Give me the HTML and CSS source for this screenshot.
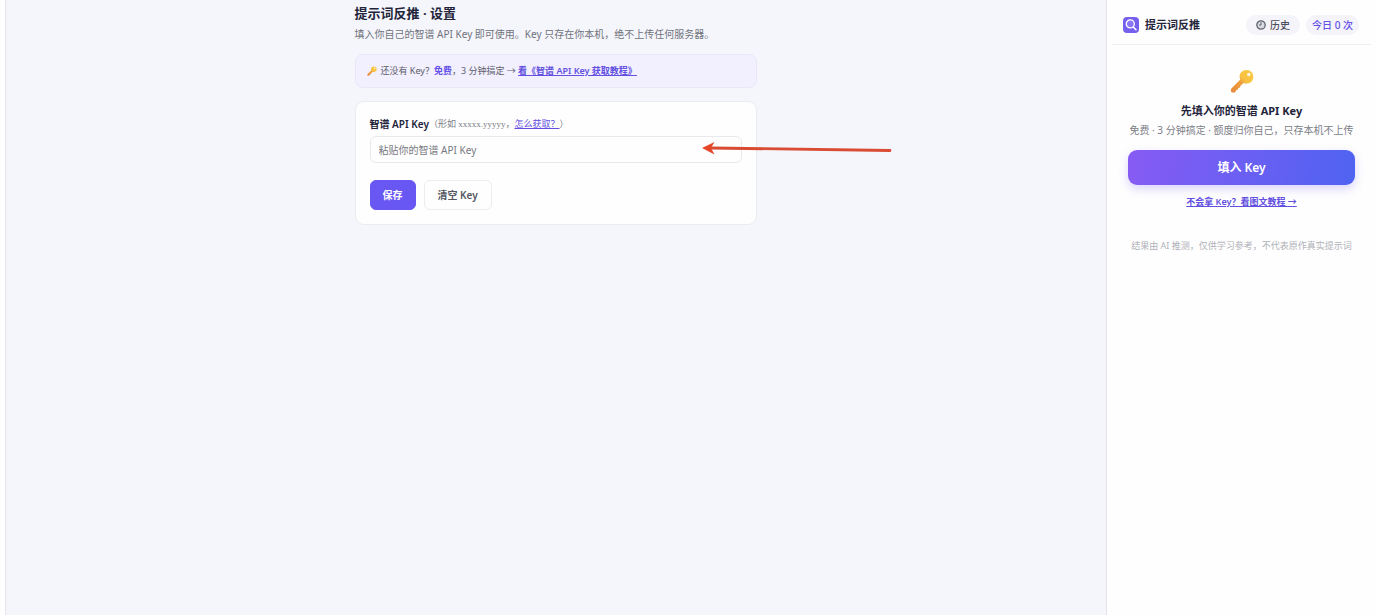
FILE: index.html
```html
<!DOCTYPE html>
<html lang="zh-CN">
<head>
<meta charset="utf-8">
<meta name="viewport" content="width=device-width, initial-scale=1">
<title>提示词反推 · 设置</title>
<link rel="stylesheet" href="styles.css">
</head>
<body>
<svg class="defs" aria-hidden="true">
  <defs>
    <linearGradient id="keyFill" x1="0" y1="1" x2="1" y2="0">
      <stop offset="0" stop-color="#e8873a"/>
      <stop offset="0.45" stop-color="#ef9f3e"/>
      <stop offset="0.6" stop-color="#f8c343"/>
      <stop offset="1" stop-color="#fbc93f"/>
    </linearGradient>
    <symbol id="key" viewBox="0 0 24 24">
      <path fill="url(#keyFill)" d="M16.5 1C12.400 1 9.600 4 9.600 7.500c0 1.100.2 2.100.7 3L1.400 19.400c-.5.5-.6 1-.5 1.600l.2 1.600c.1.600.5.900 1 .9l2.300-.1c.5 0 .8-.2 1-.6l.8-1.800 1.500-.2.600-1.900 1.700-.4.500-1.700 3.100-2.900c.9.400 1.800.6 2.900.6 4 0 6.800-2.900 6.800-6.600C23.300 4 20.500 1 16.500 1z"/>
      <circle cx="18.800" cy="5.500" r="1.700" fill="#fff8e8"/>
    </symbol>
  </defs>
</svg>
<div class="layout">
  <main class="settings">
    <div class="content">
      <h1 class="title">提示词反推 · 设置</h1>
      <p class="intro">填入你自己的智谱 API Key 即可使用。Key 只存在你本机，绝不上传任何服务器。</p>
      <div class="notice">
        <svg class="notice-key" aria-hidden="true"><use href="#key"/></svg>
        <span>还没有 Key？<b class="free">免费</b>，3 分钟搞定 → <a class="guide" href="#guide">看《智谱 API Key 获取教程》</a></span>
      </div>
      <form class="card">
        <div class="label-row">
          <label class="label" for="api-key">智谱 API Key</label>
          <span class="hint">（形如 <code class="sample">xxxxx.yyyyy</code>，<a href="#how">怎么获取？</a>）</span>
        </div>
        <div class="field">
          <input class="input" id="api-key" type="text" placeholder="粘贴你的智谱 API Key">
          <svg class="arrow" viewBox="0 0 190 14" aria-hidden="true">
            <path d="M9 6L188 8.500" fill="none" stroke="#d94b32" stroke-width="2.800" stroke-linecap="round"/>
            <path d="M0 6L12.500 0L9 6L12.500 12.500Z" fill="#e6472a"/>
          </svg>
        </div>
        <div class="actions">
          <button class="button primary" type="button">保存</button>
          <button class="button" type="button">清空 Key</button>
        </div>
      </form>
    </div>
  </main>
  <aside class="panel">
    <header class="panel-head">
      <svg class="logo" viewBox="0 0 16 16" aria-hidden="true">
        <rect width="16" height="16" rx="4" fill="#7560ee"/>
        <circle cx="7.300" cy="6.900" r="4" fill="#8b75f5" stroke="#fff" stroke-width="1.300"/>
        <path d="M10.300 10L13 12.700" stroke="#fff" stroke-width="1.600" stroke-linecap="round"/>
      </svg>
      <h2 class="brand">提示词反推</h2>
      <button class="pill" type="button">
        <svg class="clock" viewBox="0 0 10 10" aria-hidden="true">
          <circle cx="5" cy="5" r="4.200" fill="#d9dae0" stroke="#62646f" stroke-width="1.300"/>
          <path d="M5 2.200V5H3" fill="none" stroke="#555762" stroke-width="0.900"/>
        </svg>
        <span>历史</span>
      </button>
      <span class="pill count">今日 0 次</span>
    </header>
    <section class="welcome">
      <svg class="big-key" aria-hidden="true"><use href="#key"/></svg>
      <h3 class="welcome-title">先填入你的智谱 API Key</h3>
      <p class="welcome-text">免费 · 3 分钟搞定 · 额度归你自己，只存本机不上传</p>
      <button class="cta" type="button">填入 Key</button>
      <a class="tutorial" href="#tutorial">不会拿 Key？看图文教程 →</a>
    </section>
    <footer class="disclaimer">结果由 AI 推测，仅供学习参考，不代表原作真实提示词</footer>
  </aside>
</div>
</body>
</html>
```

FILE: styles.css
```css
* {
  box-sizing: border-box;
}

body {
  margin: 0;
  background: #fefefe;
  color: #23243a;
  font-family: "Noto Sans", "Noto Sans CJK SC", sans-serif;
  font-size: 10px;
  line-height: 16px;
}

h1, h2, h3, p {
  margin: 0;
}

button, input {
  font: inherit;
}

a {
  color: #6350e0;
  text-underline-offset: 1px;
}

.defs {
  position: absolute;
  width: 0;
  height: 0;
}

.layout {
  display: flex;
  min-height: 100vh;
  padding-left: 5px;
}

.settings {
  flex: 1;
  padding: 4px 17px 24px 16px;
  background: #f5f6fb;
  border-left: 1px solid #e6e7ea;
}

.content {
  max-width: 402px;
  margin: 0 auto;
}

.title {
  font-size: 13px;
  line-height: 18px;
}

.intro {
  margin-top: 4px;
  color: #70727c;
}

.notice {
  display: flex;
  align-items: center;
  gap: 4px;
  margin-top: 12px;
  padding: 8px 11px;
  border: 1px solid #ebe7fb;
  border-radius: 8px;
  background: #f2effe;
  color: #5c5d6b;
  font-size: 9px;
}

.notice-key {
  width: 10px;
  height: 10px;
}

.free {
  color: #6350e8;
}

.guide {
  font-weight: 600;
}

.card {
  margin-top: 13px;
  padding: 14px;
  border: 1px solid #ebecf0;
  border-radius: 9px;
  background: #fefefe;
}

.label-row {
  display: flex;
  align-items: center;
}

.label {
  font-weight: 600;
}

.hint {
  color: #7b7d87;
  font-size: 9px;
}

.sample {
  font-family: "Liberation Serif", serif;
  font-size: 9px;
}

.field {
  position: relative;
  margin-top: 4px;
}

.input {
  display: block;
  width: 100%;
  height: 27px;
  padding: 0 8px;
  border: 1px solid #e9eaee;
  border-radius: 6px;
  background: #fefefe;
  color: #23243a;
}

.input::placeholder {
  color: #777982;
  opacity: 1;
}

.arrow {
  position: absolute;
  top: 6px;
  left: 332px;
  width: 190px;
  height: 14px;
}

.actions {
  display: flex;
  gap: 8px;
  margin-top: 17px;
}

.button {
  height: 30px;
  padding: 0 13px;
  border: 1px solid #ecedf1;
  border-radius: 6px;
  background: #fefefe;
  color: #555662;
  font-weight: 600;
}

.primary {
  padding: 0 12px;
  border-color: #6957f3;
  background: #6957f3;
  color: #fff;
}

.panel {
  width: 271px;
  padding: 6px 6px 6px 5px;
  border-left: 1px solid #e2e3e6;
}

.panel-head {
  display: flex;
  align-items: center;
  gap: 6px;
  height: 39px;
  padding: 0 12px 0 11px;
  border-bottom: 1px solid #f0f0f4;
}

.logo {
  width: 16px;
  height: 16px;
}

.brand {
  margin-right: auto;
  font-size: 11px;
  font-weight: 600;
}

.pill {
  display: flex;
  align-items: center;
  gap: 4px;
  height: 20px;
  padding: 0 10px;
  border: 0;
  border-radius: 10px;
  background: #f4f4fa;
  color: #4c4d5a;
  font-weight: 500;
}

.clock {
  width: 10px;
  height: 10px;
}

.count {
  padding: 0 6px;
  color: #6551e5;
  font-weight: 500;
}

.welcome {
  display: flex;
  flex-direction: column;
  align-items: center;
  padding: 24px 16px 0;
}

.big-key {
  width: 24px;
  height: 24px;
}

.welcome-title {
  margin-top: 9px;
  font-size: 11px;
  line-height: 18px;
}

.welcome-text {
  margin-top: 2px;
  color: #7b7d87;
  white-space: nowrap;
}

.cta {
  width: 100%;
  height: 35px;
  margin-top: 12px;
  border: 0;
  border-radius: 9px;
  background: linear-gradient(100deg, #875bf4, #4f63f1);
  box-shadow: 0 4px 10px rgba(112, 88, 244, 0.25);
  color: #fff;
  font-size: 12px;
  font-weight: 600;
}

.tutorial {
  margin-top: 9px;
  font-size: 9px;
  font-weight: 600;
}

.disclaimer {
  margin-top: 28px;
  color: #b0b1b8;
  font-size: 9px;
  text-align: center;
}
```
